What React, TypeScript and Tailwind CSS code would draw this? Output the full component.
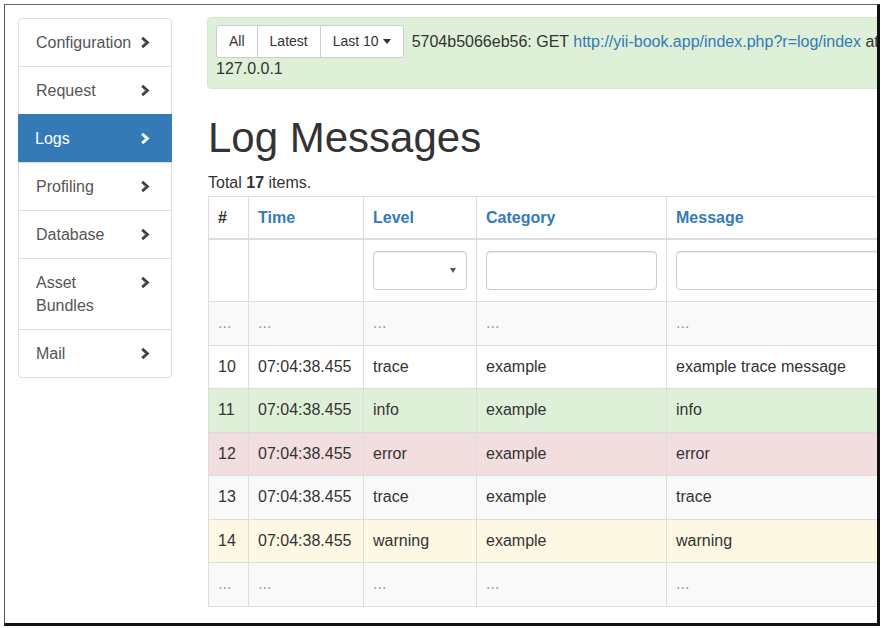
import React from "react";

const NAV = [
  { label: "Configuration" },
  { label: "Request" },
  { label: "Logs", active: true },
  { label: "Profiling" },
  { label: "Database" },
  { label: "Asset Bundles" },
  { label: "Mail" },
];

type Row = { n: string; time: string; level: string; cat: string; msg: string; tone: string; dim?: boolean };

const ROWS: Row[] = [
  { n: "...", time: "...", level: "...", cat: "...", msg: "...", tone: "bg-[#f9f9f9]", dim: true },
  { n: "10", time: "07:04:38.455", level: "trace", cat: "example", msg: "example trace message", tone: "bg-white" },
  { n: "11", time: "07:04:38.455", level: "info", cat: "example", msg: "info", tone: "bg-[#dff0d8]" },
  { n: "12", time: "07:04:38.455", level: "error", cat: "example", msg: "error", tone: "bg-[#f2dede]" },
  { n: "13", time: "07:04:38.455", level: "trace", cat: "example", msg: "trace", tone: "bg-[#f9f9f9]" },
  { n: "14", time: "07:04:38.455", level: "warning", cat: "example", msg: "warning", tone: "bg-[#fcf8e3]" },
  { n: "...", time: "...", level: "...", cat: "...", msg: "...", tone: "bg-[#f9f9f9]", dim: true },
];

function Chevron({ white }: { white?: boolean }) {
  return (
    <svg width="10" height="13" viewBox="0 0 10 13" className="mt-[5px] shrink-0">
      <path
        d="M2.2 1.8 L7.4 6.5 L2.2 11.2"
        fill="none"
        stroke={white ? "#ffffff" : "#444444"}
        strokeWidth="2.9"
        strokeLinejoin="miter"
      />
    </svg>
  );
}

function Sidebar() {
  return (
    <div className="mt-px w-[154px] shrink-0 rounded-[4px] border border-[#ddd] bg-white">
      {NAV.map((item, i) => (
        <div
          key={item.label}
          className={
            "flex items-start justify-between pl-[17px] pr-[21px] py-[12px] text-[16px] leading-[23px] " +
            (i > 0 ? "border-t " : "") +
            (item.active
              ? "bg-[#337ab7] border-[#337ab7] text-white -mx-px px-[18px] pr-[22px]"
              : "border-[#ddd] text-[#555]")
          }
        >
          <span className="w-[100px]">{item.label}</span>
          <Chevron white={item.active} />
        </div>
      ))}
    </div>
  );
}

function Toolbar() {
  return (
    <div className="rounded-[4px] border border-[#d6e9c6] bg-[#dff0d8] pl-[8px] pt-[7px] pb-[8px] text-[#333]">
      <div className="flex h-[33px] items-center whitespace-nowrap">
        <div className="flex h-[33px] text-[14px] text-[#333]">
          <span className="flex items-center rounded-l-[3px] border border-[#ccc] bg-white px-[12px]">All</span>
          <span className="-ml-px flex items-center border border-[#ccc] bg-white px-[12px]">Latest</span>
          <span className="-ml-px flex items-center gap-[4px] rounded-r-[3px] border border-[#ccc] bg-white px-[12px]">
            Last 10
            <span className="h-0 w-0 border-x-[4px] border-t-[5px] border-x-transparent border-t-[#333]" />
          </span>
        </div>
        <span className="ml-[8px] text-[16px]">
          5704b5066eb56: GET <a className="text-[#337ab7]">http://yii-book.app/index.php?r=log/index</a> at
        </span>
      </div>
      <div className="text-[16px] leading-[22px]">127.0.0.1</div>
    </div>
  );
}

function LogTable() {
  const head = "border border-[#ddd] border-b-2 px-[9px] py-[9px] text-left text-[16px] leading-[23px] font-bold";
  const cell = "border border-[#ddd] px-[9px] py-[10px] leading-[22.5px] text-[16px] whitespace-nowrap";
  const field =
    "block h-[39px] w-full rounded-[4px] border border-[#ccc] bg-white shadow-[inset_0_1px_1px_rgba(0,0,0,0.075)]";
  return (
    <table className="w-[758px] table-fixed border-collapse text-[#333]">
      <colgroup>
        <col className="w-[40px]" />
        <col className="w-[115px]" />
        <col className="w-[113px]" />
        <col className="w-[190px]" />
        <col className="w-[300px]" />
      </colgroup>
      <thead>
        <tr>
          <th className={head}>#</th>
          <th className={head + " text-[#337ab7]"}>Time</th>
          <th className={head + " text-[#337ab7]"}>Level</th>
          <th className={head + " text-[#337ab7]"}>Category</th>
          <th className={head + " text-[#337ab7]"}>Message</th>
        </tr>
        <tr>
          <td className="border border-[#ddd] py-[11px]" />
          <td className="border border-[#ddd] py-[11px]" />
          <td className="border border-[#ddd] px-[9px] py-[11px]">
            <div className={field + " flex items-center justify-end pr-[10px]"}>
              <span className="h-0 w-0 border-x-[3px] border-t-[5px] border-x-transparent border-t-[#555]" />
            </div>
          </td>
          <td className="border border-[#ddd] px-[9px] py-[11px]">
            <input className={field} />
          </td>
          <td className="border border-[#ddd] px-[9px] py-[11px]">
            <input className={field} />
          </td>
        </tr>
      </thead>
      <tbody>
        {ROWS.map((r, i) => {
          const dim = r.dim ? " text-[11px] text-[#999]" : "";
          return (
            <tr key={i} className={r.tone}>
              <td className={cell + dim}>{r.n}</td>
              <td className={cell + dim}>{r.time}</td>
              <td className={cell + dim}>{r.level}</td>
              <td className={cell + dim}>{r.cat}</td>
              <td className={cell + dim}>{r.msg}</td>
            </tr>
          );
        })}
      </tbody>
    </table>
  );
}

export default function App() {
  return (
    <div className="h-[628px] w-[883px] bg-white pl-[4px] pt-[4px] font-['Liberation_Sans',Arial,sans-serif]">
      <div className="flex h-[622px] w-[876px] items-start overflow-hidden border-l border-t border-l-[#555] border-t-[#666] border-r-[3px] border-b-[3px] border-r-[#111] border-b-[#111] pl-[13px] pt-[12px]">
        <Sidebar />
        <main className="ml-[35px] w-[760px] shrink-0">
          <Toolbar />
          <h1 className="mt-[26px] pl-px text-[42px] leading-[45px] font-normal text-[#333]">Log Messages</h1>
          <div className="mt-[12px] pl-px text-[16px] leading-[22px] text-[#333]">
            Total <b>17</b> items.
          </div>
          <div className="mt-[2px] pl-px">
            <LogTable />
          </div>
        </main>
      </div>
    </div>
  );
}
